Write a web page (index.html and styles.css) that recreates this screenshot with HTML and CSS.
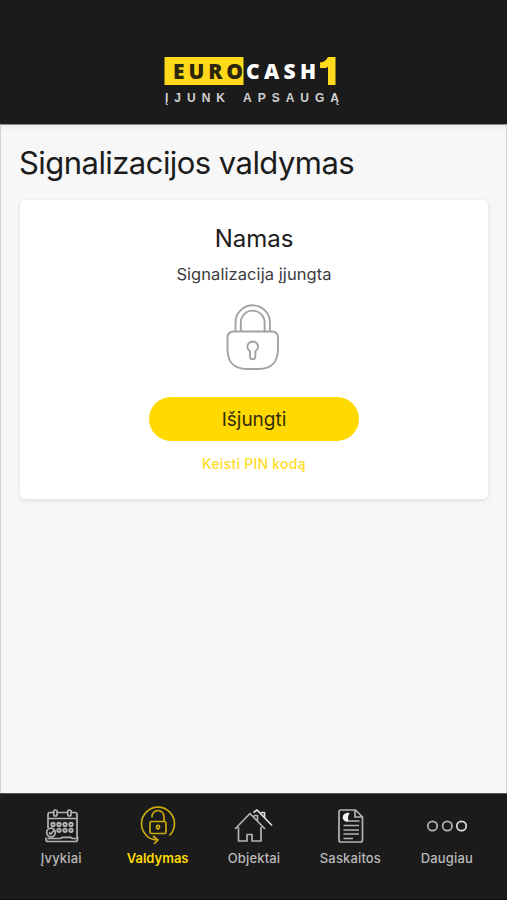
FILE: index.html
```html
<!DOCTYPE html>
<html lang="lt">
<head>
<meta charset="utf-8">
<meta name="viewport" content="width=device-width, initial-scale=1">
<title>Signalizacijos valdymas</title>
<link rel="stylesheet" href="styles.css">
</head>
<body>
<header class="header">
  <svg class="logo" width="184" height="56" viewBox="160 52 184 56" role="img" aria-label="Eurocash1">
    <rect x="164.500" y="57" width="79" height="28" fill="#ffd91a"/>
    <text class="logo-word" x="173" y="78.500" textLength="70" fill="#2b260c">EURO</text>
    <text class="logo-word" x="246" y="78.500" textLength="70" fill="#fff">CASH</text>
    <path d="M328 57h7.500v28H328V66.500l-2 1.500h-6v-5.500q5.500-.5 8-5.500z" fill="#ffd91a"/>
    <text class="logo-sub" x="165" y="102" textLength="60">ĮJUNK</text>
    <text class="logo-sub" x="243" y="102" textLength="96">APSAUGĄ</text>
  </svg>
</header>
<main class="main">
  <h1 class="title">Signalizacijos valdymas</h1>
  <section class="card">
    <h2 class="name">Namas</h2>
    <p class="status">Signalizacija įjungta</p>
    <svg class="lock" width="56" height="70" viewBox="225 302 56 70">
      <path d="M235.500 331.500v-9a17.200 17.200 0 0 1 34.400 0v9M240.800 331.500v-9a11.900 11.900 0 0 1 23.800 0v9"/>
      <path d="M234 331.500h37.500q6.500 0 6.500 6.500v11c0 13-7 20-19 20h-12.500c-12 0-19-7-19-20v-11q0-6.500 6.500-6.500z"/>
      <path d="M250 351.300a5.300 5.300 0 1 1 5.400 0v5.200a2.700 2.700 0 0 1-5.400 0z"/>
    </svg>
    <button class="button" type="button">Išjungti</button>
    <a class="pin" href="#">Keisti PIN kodą</a>
  </section>
</main>
<nav class="nav">
  <a class="tab" href="#">
    <svg class="icon" width="40" height="40" viewBox="41.500 806 40 40">
      <path d="M54 812.500h-3.500q-2 0-2 2V828M58 812.500h9.500M72 812.500h3.500q2 0 2 2V838M48.500 818.500h29"/>
      <rect x="54.200" y="810" width="3.400" height="6" rx="1.700"/><rect x="68.200" y="810" width="3.400" height="6" rx="1.700"/>
      <g stroke-width="1.900"><circle cx="53.500" cy="824.500" r="1.700"/><circle cx="59.500" cy="824.500" r="1.700"/><circle cx="65.500" cy="824.500" r="1.700"/><circle cx="71.500" cy="824.500" r="1.700"/><circle cx="59.500" cy="830.300" r="1.700"/><circle cx="65.500" cy="830.300" r="1.700"/><circle cx="71.500" cy="830.300" r="1.700"/></g>
      <circle cx="51.500" cy="832.500" r="4.300"/><path d="m49.500 832.500 1.500 1.700 4-4.500M46.500 837.500v2q0 2 2 2H76q2 0 2-2v-3M48 838.500h13l2-1.200h8l2 1.200h4"/>
    </svg>
    <span>Įvykiai</span>
  </a>
  <a class="tab active" href="#">
    <svg class="icon" width="40" height="40" viewBox="138 806 40 40">
      <path d="M169.500 835.500A16.500 16.500 0 1 0 146.500 835.500Q150 839.500 157 840M153 836l5 4-4 4"/>
      <rect x="150" y="821.500" width="16" height="12" rx="1.500"/>
      <path d="M152 817.500v-1a6 6 0 0 1 12 0v5M158 828.500v1.500"/><circle cx="158" cy="827" r="1.600"/>
    </svg>
    <span>Valdymas</span>
  </a>
  <a class="tab" href="#">
    <svg class="icon" width="40" height="40" viewBox="234 806 40 40">
      <path d="m235 829 15-15.500L265 829M238.500 827v14h8.500v-6.500h5V841h9v-14M254.500 816.500v-1h3v5"/>
      <path class="bright" d="m253.500 812.500 3.500-2.500 15 15.500M261.500 813.500v-1h3v5"/>
    </svg>
    <span>Objektai</span>
  </a>
  <a class="tab" href="#">
    <svg class="icon" width="40" height="40" viewBox="330 806 40 40">
      <path d="M341 810h14.500l7 7v23q0 2-2 2H341q-2 0-2-2v-28q0-2 2-2zM355 810.500v6.500h7"/>
      <path d="M349 821h10.500M343.500 825.500h15.500M343.500 830h15.500M343.500 834h15.500M343.500 838.500h9.500"/>
      <path d="M348.500 813.500q-4.500 0-5 3.800.5 3.700 4.500 3.700-2-3.700.5-7.500z" fill="#eee" stroke="#eee"/>
    </svg>
    <span>Saskaitos</span>
  </a>
  <a class="tab" href="#">
    <svg class="icon dots" width="44" height="40" viewBox="425 806 44 40">
      <circle cx="432.500" cy="826" r="4.700"/><circle cx="447.300" cy="826" r="4.700"/><circle class="bright" cx="461.500" cy="826" r="4.700"/>
    </svg>
    <span>Daugiau</span>
  </a>
</nav>
</body>
</html>
```
FILE: styles.css
```css
* { box-sizing: border-box; }
body {
  margin: 0;
  height: 900px;
  display: flex;
  flex-direction: column;
  font-family: Inter, "Liberation Sans", sans-serif;
  color: #1c1c1c;
  background: #f7f7f7;
  overflow: hidden;
}
a { text-decoration: none; }
.header {
  height: 124px;
  padding: 52px 0 0 160px;
  background: #1b1b1b;
}
.logo { display: block; }
.logo-word { font: 800 21px "Open Sans", sans-serif; }
.logo-sub { font: 700 12px "Liberation Sans", sans-serif; fill: #d0d0d0; }
.main {
  flex: 1;
  padding: 18px 18px 0 18px;
  border: solid #d4d4d4;
  border-width: 1px 1px 0;
  border-top-color: #8c8c8c;
  background: linear-gradient(#eeecee, #f7f7f7 7px);
}
.title {
  margin: 0 0 18px;
  font-size: 31px;
  font-weight: 400;
  line-height: 39px;
  letter-spacing: -0.55px;
  white-space: nowrap;
}
.card {
  height: 299px;
  margin-left: 1px;
  padding-top: 24px;
  display: flex;
  flex-direction: column;
  align-items: center;
  border-radius: 5px;
  background: #fff;
  box-shadow: 0 1px 4px rgba(0, 0, 0, .12);
}
.name {
  margin: 0;
  font-size: 24px;
  font-weight: 400;
  line-height: 30px;
}
.status {
  margin: 9px 0 0;
  font-size: 16.5px;
  line-height: 22px;
  letter-spacing: 0.07px;
  color: #3c3c3c;
}
.lock {
  margin: 17px 2px 0 0;
  fill: none;
  stroke: #a2a2a2;
  stroke-width: 1.9;
}
.button {
  width: 210px;
  height: 44px;
  margin-top: 25px;
  padding: 0;
  border: 0;
  border-radius: 22px;
  background: #ffd900;
  color: #332d0c;
  font: 400 19px/45px Inter, sans-serif;
}
.pin {
  margin-top: 13px;
  font-size: 14px;
  line-height: 20px;
  font-weight: 500;
  letter-spacing: 0.25px;
  color: #ffdc2b;
}
.nav {
  height: 107px;
  padding: 12px 12px 0 13px;
  display: flex;
  border-top: 1px solid #555;
  border-bottom: 1px solid #10060c;
  background: #1b1b1b;
}
.tab {
  flex: 1;
  display: flex;
  flex-direction: column;
  align-items: center;
  color: #b9b9b9;
  font-size: 13px;
  line-height: 18px;
  font-weight: 500;
  letter-spacing: 0.15px;
}
.tab span { margin-top: 3px; }
.icon {
  fill: none;
  stroke: #b4b4b4;
  stroke-width: 1.7;
  stroke-linejoin: round;
}
.bright { stroke: #ddd; }
.active { color: #ffdc00; font-weight: 600; letter-spacing: 0; }
.active .icon { stroke: #c9aa0e; }
```
